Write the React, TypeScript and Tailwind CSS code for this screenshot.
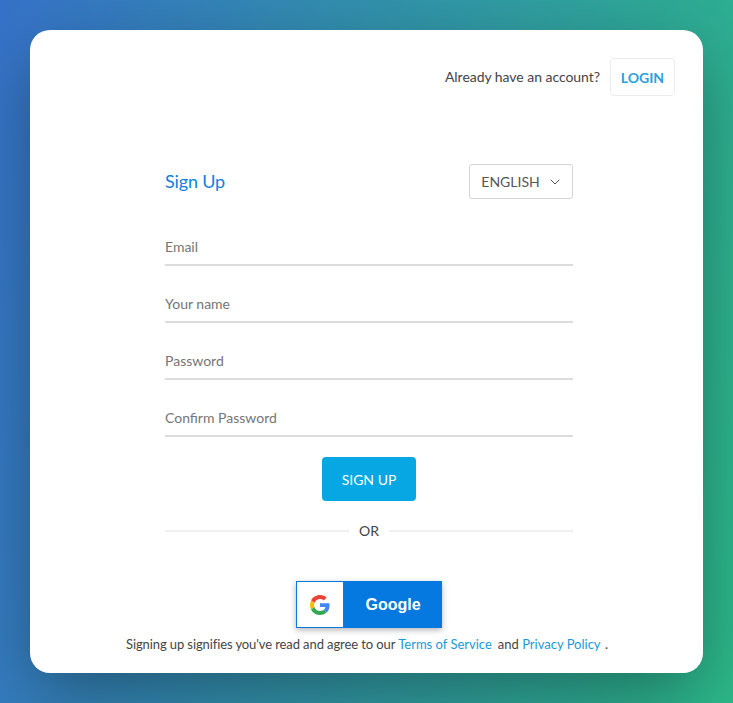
import { ChevronDown } from "lucide-react";

function Field({ placeholder, type = "text" }: { placeholder: string; type?: string }) {
  return (
    <input
      type={type}
      placeholder={placeholder}
      className="block h-[38px] w-full border-b-2 border-[#dcdcdc] bg-transparent pt-[1px] text-[14px] text-[#333] outline-none placeholder:text-[#757575]"
    />
  );
}

function GoogleLogo() {
  return (
    <svg viewBox="0 0 48 48" className="size-[20px]">
      <path fill="#EA4335" d="M24 9.5c3.54 0 6.71 1.22 9.21 3.6l6.85-6.85C35.9 2.38 30.47 0 24 0 14.62 0 6.51 5.38 2.56 13.22l7.98 6.19C12.43 13.72 17.74 9.5 24 9.5z" />
      <path fill="#4285F4" d="M46.98 24.55c0-1.57-.15-3.09-.38-4.55H24v9.02h12.94c-.58 2.96-2.26 5.48-4.78 7.18l7.73 6c4.51-4.18 7.09-10.36 7.09-17.65z" />
      <path fill="#FBBC05" d="M10.53 28.59c-.48-1.45-.76-2.99-.76-4.59s.27-3.14.76-4.59l-7.98-6.19C.92 16.46 0 20.12 0 24c0 3.88.92 7.54 2.56 10.78l7.97-6.19z" />
      <path fill="#34A853" d="M24 48c6.48 0 11.93-2.13 15.89-5.81l-7.73-6c-2.15 1.45-4.92 2.3-8.16 2.3-6.26 0-11.57-4.22-13.47-9.91l-7.98 6.19C6.51 42.62 14.62 48 24 48z" />
    </svg>
  );
}

export default function App() {
  return (
    <main className="relative flex h-[703px] w-full overflow-hidden bg-[linear-gradient(100deg,#3672c8_0%,#2cb888_100%)] p-[30px] font-['Lato','Liberation_Sans',sans-serif] text-[#333]">
      <div className="flex h-[643px] w-[673px] flex-col rounded-[20px] bg-white shadow-[0_24px_70px_-6px_rgba(0,0,0,0.36)]">
        <div className="flex items-center justify-end gap-[10px] pr-[28px] pt-[28px]">
          <span className="relative top-[-1px] text-[14px] tracking-[-0.04px] text-[#444]">Already have an account?</span>
          <button className="h-[38px] w-[65px] rounded-[4px] border border-[#ececec] text-[14px] font-bold text-[#2b9fe0]">
            LOGIN
          </button>
        </div>
        <div className="ml-[135px] mt-[68px] w-[408px]">
          <div className="flex items-center justify-between">
            <h1 className="text-[18px] font-normal tracking-[-0.15px] text-[#127fdc]">Sign Up</h1>
            <button className="flex h-[35px] w-[104px] items-center justify-center gap-[7px] rounded-[3px] border border-[#d5d5d5] pl-[2px] text-[14px] text-[#555]">
              ENGLISH
              <ChevronDown className="size-[16px] text-[#555]" strokeWidth={1.5} />
            </button>
          </div>
          <div className="mt-[29px] flex flex-col gap-[19px]">
            <Field placeholder="Email" type="email" />
            <Field placeholder="Your name" />
            <Field placeholder="Password" type="password" />
            <Field placeholder="Confirm Password" type="password" />
          </div>
          <button className="mx-auto mt-[20px] block h-[44px] w-[94px] rounded-[4px] bg-[#06a7e2] text-[14px] text-white">
            SIGN UP
          </button>
          <div className="mt-[19px] flex items-center gap-[10px] text-[14px] text-[#444]">
            <span className="h-[2px] flex-1 bg-[#f0f0f0]" />
            OR
            <span className="h-[2px] flex-1 bg-[#f0f0f0]" />
          </div>
          <button className="mx-auto mt-[40px] flex h-[47px] w-[146px] items-stretch border border-[#0679e0] bg-[#0679e0] shadow-[0_2px_6px_rgba(0,0,0,0.3)]">
            <span className="flex w-[46px] items-center justify-center bg-white">
              <GoogleLogo />
            </span>
            <span className="flex flex-1 items-center justify-center pl-[2px] font-['Liberation_Sans',sans-serif] text-[16px] font-bold text-white">
              Google
            </span>
          </button>
        </div>
        <p className="mt-[7px] pl-[96px] text-[13px] text-[#444]">
          <span className="tracking-[-0.1px]">Signing up signifies you've read and agree to our</span>{" "}
          <a className="text-[#1a9ad9]">Terms of Service</a>
          <span className="ml-[6px]">and</span> <a className="text-[#1a9ad9]">Privacy Policy</a>
          <span className="ml-[1px]"> .</span>
        </p>
      </div>
    </main>
  );
}
